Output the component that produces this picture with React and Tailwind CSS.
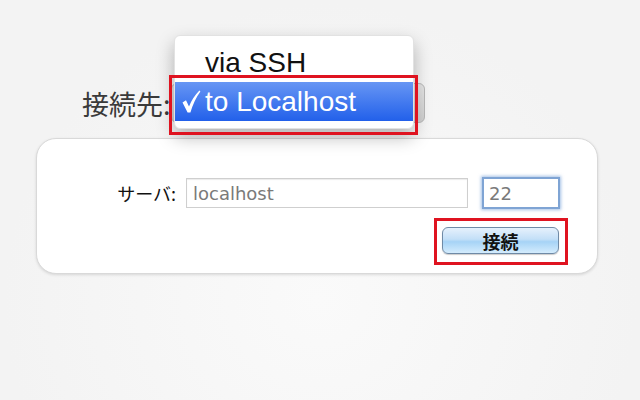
import React from 'react';

const cjk = "font-['Noto_Sans_CJK_JP','Noto_Sans_CJK_SC',sans-serif]";

function Check() {
  return (
    <svg width="19" height="23" viewBox="0 0 19 23" className="shrink-0">
      <path d="M0.5 12.5 L4 10.2 L7 16.4 Q10.4 7.6 17.4 0.4 L18.4 1.4 Q12 10 8.4 22.6 L5.6 22.6 Z" fill="white" />
    </svg>
  );
}

export default function App() {
  return (
    <div className="relative w-[640px] h-[400px] overflow-hidden bg-[radial-gradient(ellipse_at_50%_75%,#fafafa_0%,#f3f3f3_70%)]">
      {/* connection target row */}
      <div className="flex items-center pl-[82px] pt-[83px]">
        <span className={`text-[27px] leading-none text-[#3a3a3a] ${cjk}`}>接続先:</span>
        <div className="w-[254px] h-[40px] rounded-[6px] border border-[#b8b8b8] bg-[linear-gradient(#e4e4e4,#cfcfcf)]" />
      </div>

      {/* open popup menu */}
      <div className="absolute left-[174px] top-[35px] w-[240px] py-[7px] rounded-[6px] bg-white border border-[#e2e2e2] shadow-[0_8px_18px_rgba(0,0,0,0.28)] font-['Liberation_Sans',Arial,sans-serif] text-[28px]">
        <div className="h-[39px] flex items-center pl-[30px] text-[#111]">via SSH</div>
        <div className="h-[39px] flex items-center bg-[linear-gradient(#6796f4,#2260ea)] text-white">
          <span className="w-[30px] pl-[7px] flex items-center">
            <Check />
          </span>
          <span>to Localhost</span>
        </div>
        <div className="absolute -left-[6px] -right-[5px] top-[39px] -bottom-[7px] border-[3px] border-[#df1320]" />
      </div>

      {/* settings card */}
      <div className="mx-[36px] mt-[15px] w-[562px] rounded-[20px] bg-white border border-[#d9d9d9] shadow-[0_1px_3px_rgba(0,0,0,0.12)] pt-[38px] pb-[18px] pr-[37px] flex flex-col items-end">
        <div className="flex items-center">
          <span className={`text-[18px] text-[#111] mr-[10px] ${cjk}`}>サーバ:</span>
          <div className="w-[282px] h-[30px] border border-[#cfcfcf] shadow-[inset_0_1px_1px_rgba(0,0,0,0.08)] flex items-center pl-[6px] font-['DejaVu_Sans',sans-serif] text-[18px] text-[#7a7a7a]">
            localhost
          </div>
          <div className="ml-[14px] w-[78px] h-[32px] border-2 border-[#7fa4d4] shadow-[0_0_3px_1px_rgba(90,140,210,0.55)] flex items-center pl-[5px] font-['DejaVu_Sans',sans-serif] text-[18px] text-[#7a7a7a]">
            22
          </div>
        </div>
        <div className="relative mt-[18px] mr-[1px]">
          <button className={`w-[117px] h-[27px] rounded-[6px] border border-[#6f8aa6] bg-[linear-gradient(#e6f1fc_0%,#c3dff7_45%,#a6d3f6_55%,#d4ecfd_100%)] shadow-[0_1px_1px_rgba(0,0,0,0.2)] text-[18px] font-bold leading-none text-[#111] ${cjk}`}>
            接続
          </button>
          <div className="absolute -left-[8px] -right-[9px] -top-[9px] -bottom-[10px] border-[3px] border-[#df1320]" />
        </div>
      </div>
    </div>
  );
}
